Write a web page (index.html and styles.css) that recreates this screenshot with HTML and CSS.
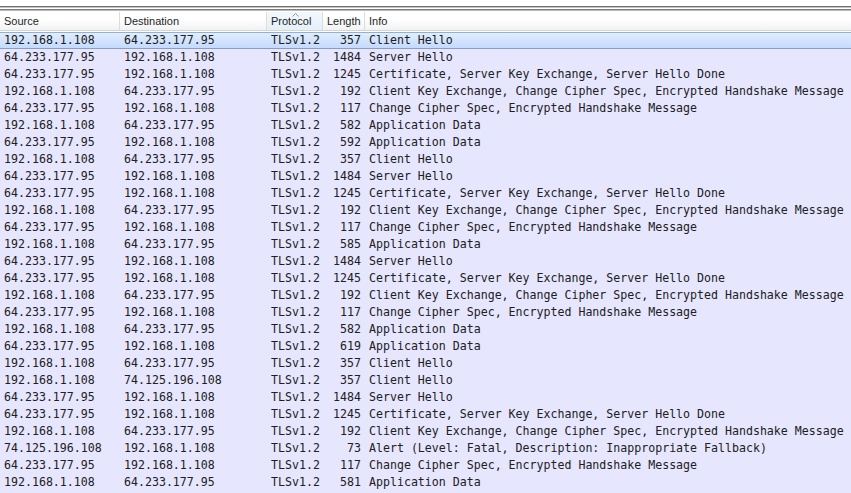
FILE: index.html
```html
<!DOCTYPE html>
<html>
<head>
<meta charset="utf-8">
<link rel="stylesheet" href="styles.css">
</head>
<body>
<div class="topbar"><div class="line1"></div><div class="line2"></div></div>
<div class="header">
  <div class="hcell">Source</div>
  <div class="hcell">Destination</div>
  <div class="hcell sorted"><svg class="caret" width="7" height="4" viewBox="0 0 7 4"><path d="M0.5 3.5 L3.5 0.5 L6.5 3.5" fill="none" stroke="#8a9bb0" stroke-width="1"/></svg>Protocol</div>
  <div class="hcell">Length</div>
  <div class="hcell last">Info</div>
</div>
<div class="list">
  <div class="row selected"><span>192.168.1.108</span><span>64.233.177.95</span><span>TLSv1.2</span><span class="len">357</span><span>Client Hello</span></div>
  <div class="row"><span>64.233.177.95</span><span>192.168.1.108</span><span>TLSv1.2</span><span class="len">1484</span><span>Server Hello</span></div>
  <div class="row"><span>64.233.177.95</span><span>192.168.1.108</span><span>TLSv1.2</span><span class="len">1245</span><span>Certificate, Server Key Exchange, Server Hello Done</span></div>
  <div class="row"><span>192.168.1.108</span><span>64.233.177.95</span><span>TLSv1.2</span><span class="len">192</span><span>Client Key Exchange, Change Cipher Spec, Encrypted Handshake Message</span></div>
  <div class="row"><span>64.233.177.95</span><span>192.168.1.108</span><span>TLSv1.2</span><span class="len">117</span><span>Change Cipher Spec, Encrypted Handshake Message</span></div>
  <div class="row"><span>192.168.1.108</span><span>64.233.177.95</span><span>TLSv1.2</span><span class="len">582</span><span>Application Data</span></div>
  <div class="row"><span>64.233.177.95</span><span>192.168.1.108</span><span>TLSv1.2</span><span class="len">592</span><span>Application Data</span></div>
  <div class="row"><span>192.168.1.108</span><span>64.233.177.95</span><span>TLSv1.2</span><span class="len">357</span><span>Client Hello</span></div>
  <div class="row"><span>64.233.177.95</span><span>192.168.1.108</span><span>TLSv1.2</span><span class="len">1484</span><span>Server Hello</span></div>
  <div class="row"><span>64.233.177.95</span><span>192.168.1.108</span><span>TLSv1.2</span><span class="len">1245</span><span>Certificate, Server Key Exchange, Server Hello Done</span></div>
  <div class="row"><span>192.168.1.108</span><span>64.233.177.95</span><span>TLSv1.2</span><span class="len">192</span><span>Client Key Exchange, Change Cipher Spec, Encrypted Handshake Message</span></div>
  <div class="row"><span>64.233.177.95</span><span>192.168.1.108</span><span>TLSv1.2</span><span class="len">117</span><span>Change Cipher Spec, Encrypted Handshake Message</span></div>
  <div class="row"><span>192.168.1.108</span><span>64.233.177.95</span><span>TLSv1.2</span><span class="len">585</span><span>Application Data</span></div>
  <div class="row"><span>64.233.177.95</span><span>192.168.1.108</span><span>TLSv1.2</span><span class="len">1484</span><span>Server Hello</span></div>
  <div class="row"><span>64.233.177.95</span><span>192.168.1.108</span><span>TLSv1.2</span><span class="len">1245</span><span>Certificate, Server Key Exchange, Server Hello Done</span></div>
  <div class="row"><span>192.168.1.108</span><span>64.233.177.95</span><span>TLSv1.2</span><span class="len">192</span><span>Client Key Exchange, Change Cipher Spec, Encrypted Handshake Message</span></div>
  <div class="row"><span>64.233.177.95</span><span>192.168.1.108</span><span>TLSv1.2</span><span class="len">117</span><span>Change Cipher Spec, Encrypted Handshake Message</span></div>
  <div class="row"><span>192.168.1.108</span><span>64.233.177.95</span><span>TLSv1.2</span><span class="len">582</span><span>Application Data</span></div>
  <div class="row"><span>64.233.177.95</span><span>192.168.1.108</span><span>TLSv1.2</span><span class="len">619</span><span>Application Data</span></div>
  <div class="row"><span>192.168.1.108</span><span>64.233.177.95</span><span>TLSv1.2</span><span class="len">357</span><span>Client Hello</span></div>
  <div class="row"><span>192.168.1.108</span><span>74.125.196.108</span><span>TLSv1.2</span><span class="len">357</span><span>Client Hello</span></div>
  <div class="row"><span>64.233.177.95</span><span>192.168.1.108</span><span>TLSv1.2</span><span class="len">1484</span><span>Server Hello</span></div>
  <div class="row"><span>64.233.177.95</span><span>192.168.1.108</span><span>TLSv1.2</span><span class="len">1245</span><span>Certificate, Server Key Exchange, Server Hello Done</span></div>
  <div class="row"><span>192.168.1.108</span><span>64.233.177.95</span><span>TLSv1.2</span><span class="len">192</span><span>Client Key Exchange, Change Cipher Spec, Encrypted Handshake Message</span></div>
  <div class="row"><span>74.125.196.108</span><span>192.168.1.108</span><span>TLSv1.2</span><span class="len">73</span><span>Alert (Level: Fatal, Description: Inappropriate Fallback)</span></div>
  <div class="row"><span>64.233.177.95</span><span>192.168.1.108</span><span>TLSv1.2</span><span class="len">117</span><span>Change Cipher Spec, Encrypted Handshake Message</span></div>
  <div class="row"><span>192.168.1.108</span><span>64.233.177.95</span><span>TLSv1.2</span><span class="len">581</span><span>Application Data</span></div>
</div>
</body>
</html>
```
FILE: styles.css
```css
html, body {
  margin: 0;
  padding: 0;
  background: #ffffff;
  width: 851px;
  height: 493px;
  overflow: hidden;
}
.topbar {
  height: 12px;
  padding-top: 6px;
  box-sizing: border-box;
}
.line1 {
  height: 1px;
  background: #6e6e6e;
  border-bottom: 1px solid #c4c4c4;
}
.line2 {
  margin-top: 1px;
  height: 1px;
  background: #7e7e7e;
  border-bottom: 1px solid #b8b8b8;
}
.header {
  display: grid;
  grid-template-columns: 120px 147px 56px 42px 1fr;
  height: 19px;
  box-sizing: border-box;
  border-bottom: 1px solid #d5d5d5;
  background: linear-gradient(#ffffff, #ffffff 40%, #f1f2f4);
  font-family: "Liberation Sans", Arial, sans-serif;
  font-size: 11px;
  color: #1e1e1e;
  margin-bottom: 1px;
}
.hcell {
  position: relative;
  padding: 0 0 0 4px;
  line-height: 19px;
  border-right: 1px solid #dcdcdc;
  white-space: nowrap;
  overflow: hidden;
}
.hcell.last {
  border-right: none;
}
.hcell.sorted {
  background: linear-gradient(#f2f8fd, #e6f0f9);
}
.caret {
  position: absolute;
  left: 25px;
  top: 1px;
}
.list {
  background: #e7e6ff;
  height: 461px;
}
.row {
  display: grid;
  grid-template-columns: 120px 147px 56px 42px 1fr;
  height: 17px;
  line-height: 17px;
  font-family: "DejaVu Sans Mono", "Liberation Mono", monospace;
  font-size: 11.6px;
  color: #202020;
  white-space: nowrap;
  overflow: hidden;
}
.row span {
  padding-left: 4px;
  overflow: hidden;
}
.row span.len {
  text-align: right;
  padding-left: 0;
  padding-right: 4px;
}
.row.selected {
  height: 17px;
  line-height: 15px;
  box-sizing: border-box;
  border-top: 1px solid #8fb2dd;
  border-bottom: 1px solid #8a9ec0;
  background: linear-gradient(#e2edfd, #c3dbfe);
}
```
